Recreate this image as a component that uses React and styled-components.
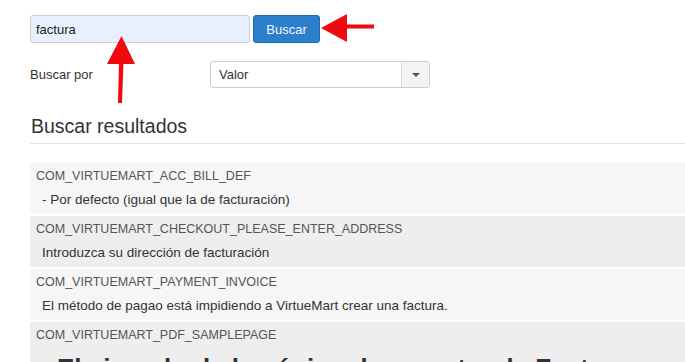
import React from 'react';
import styled, { createGlobalStyle } from 'styled-components';

const GlobalStyle = createGlobalStyle`
  html, body {
    margin: 0;
    padding: 0;
    background: #fff;
  }
  body {
    font-family: "Liberation Sans", Arial, sans-serif;
    color: #333;
    overflow: hidden;
  }
`;

const Page = styled.div`
  position: relative;
  width: 685px;
  height: 362px;
  padding: 15px 0 0 30px;
  box-sizing: border-box;
  overflow: hidden;
`;

const SearchRow = styled.div`
  display: flex;
  align-items: center;
  gap: 3px;
`;

const SearchInput = styled.input`
  box-sizing: border-box;
  width: 220px;
  height: 28px;
  padding: 0 5px;
  border: 1px solid #c9ced6;
  border-radius: 3px;
  background: #e8f0fe;
  font-family: inherit;
  font-size: 13px;
  color: #222;
  outline: none;
`;

const Button = styled.button`
  box-sizing: border-box;
  width: 67px;
  height: 28px;
  border: 1px solid #1f69ae;
  border-radius: 3px;
  background: #2b7fcb;
  color: #f2f7ff;
  font-family: inherit;
  font-size: 13px;
  cursor: pointer;
`;

const FieldRow = styled.div`
  display: flex;
  align-items: center;
  margin-top: 18px;
`;

const Label = styled.label`
  width: 180px;
  font-size: 13px;
  color: #333;
`;

const Select = styled.div`
  box-sizing: border-box;
  display: flex;
  width: 220px;
  height: 27px;
  border: 1px solid #ccc;
  border-radius: 3px;
  background: #fff;
  overflow: hidden;
`;

const SelectValue = styled.span`
  flex: 1;
  display: flex;
  align-items: center;
  padding-left: 8px;
  font-size: 13px;
  color: #333;
`;

const SelectToggle = styled.span`
  width: 27px;
  display: flex;
  align-items: center;
  justify-content: center;
  border-left: 1px solid #ddd;
  background: #f3f3f3;

  &::after {
    content: '';
    border-left: 4px solid transparent;
    border-right: 4px solid transparent;
    border-top: 4px solid #555;
  }
`;

const Heading = styled.h2`
  margin: 26px 0 0;
  padding: 0 1px 5px;
  font-size: 19.5px;
  line-height: 24px;
  font-weight: normal;
  color: #333;
  border-bottom: 1px solid #e3e3e3;
`;

const Results = styled.div`
  display: flex;
  flex-direction: column;
  gap: 2px;
  margin-top: 19px;
`;

const Result = styled.div`
  padding: 4px 6px;
  background: ${({ $odd }) => ($odd ? '#f6f6f6' : '#eeeeee')};
`;

const Key = styled.div`
  font-size: 12.5px;
  line-height: 18px;
  color: #555;
`;

const Value = styled.div`
  margin-top: ${({ $big }) => ($big ? '9px' : '5px')};
  padding-left: ${({ $big }) => ($big ? '21px' : '6px')};
  font-size: ${({ $big }) => ($big ? '26px' : '13.5px')};
  font-weight: ${({ $big }) => ($big ? 'bold' : 'normal')};
  line-height: ${({ $big }) => ($big ? '30px' : '20px')};
  color: #333;
  white-space: nowrap;
`;

const Arrow = styled.svg`
  position: absolute;
  left: ${({ $x }) => $x}px;
  top: ${({ $y }) => $y}px;
  overflow: visible;
`;

const results = [
  {
    key: 'COM_VIRTUEMART_ACC_BILL_DEF',
    value: '- Por defecto (igual que la de facturación)',
  },
  {
    key: 'COM_VIRTUEMART_CHECKOUT_PLEASE_ENTER_ADDRESS',
    value: 'Introduzca su dirección de facturación',
  },
  {
    key: 'COM_VIRTUEMART_PAYMENT_INVOICE',
    value: 'El método de pagao está impidiendo a VirtueMart crear una factura.',
  },
  {
    key: 'COM_VIRTUEMART_PDF_SAMPLEPAGE',
    value: 'El ejemplo de la página de muestra de Factura',
    big: true,
  },
];

const App = () => (
  <>
    <GlobalStyle />
    <Page>
      <SearchRow>
        <SearchInput defaultValue="factura" />
        <Button>Buscar</Button>
      </SearchRow>
      <FieldRow>
        <Label>Buscar por</Label>
        <Select>
          <SelectValue>Valor</SelectValue>
          <SelectToggle />
        </Select>
      </FieldRow>
      <Heading>Buscar resultados</Heading>
      <Results>
        {results.map(({ key, value, big }, i) => (
          <Result key={key} $odd={i % 2 === 0}>
            <Key>{key}</Key>
            <Value $big={big}>{value}</Value>
          </Result>
        ))}
      </Results>

      <Arrow $x={321} $y={14} width="53" height="28" viewBox="0 0 53 28">
        <polygon points="0,14 26,0 26,28" fill="#ee0a0f" />
        <rect x="24" y="10.5" width="29" height="4" fill="#ee0a0f" />
      </Arrow>
      <Arrow $x={107} $y={36} width="28" height="68" viewBox="0 0 28 68">
        <polygon points="14.5,0 0,28 28,28" fill="#ee0a0f" />
        <polygon points="12,26 16.5,26 15,67 11,67" fill="#ee0a0f" />
      </Arrow>
    </Page>
  </>
);

export default App;
